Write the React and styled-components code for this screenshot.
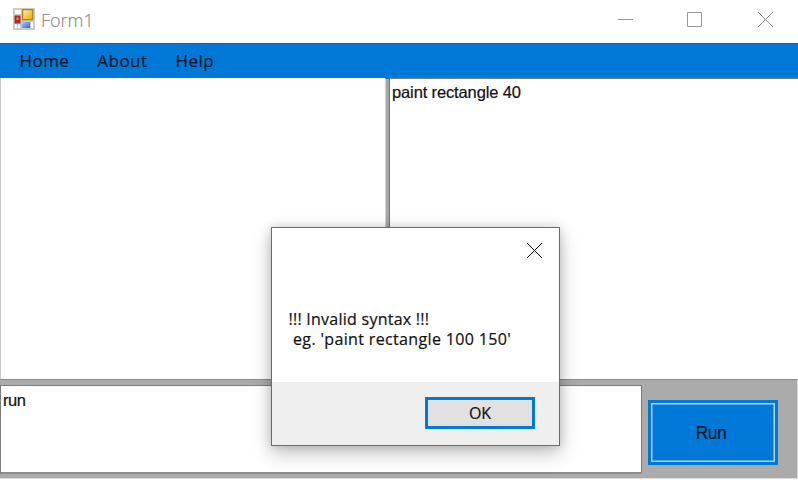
import React from "react";
import styled, { createGlobalStyle } from "styled-components";

const Global = createGlobalStyle`
  *, *::before, *::after { box-sizing: border-box; }
  body { margin: 0; overflow: hidden; background: #fff; }
`;

const Window = styled.div`
  position: relative;
  display: flex;
  flex-direction: column;
  width: 798px;
  height: 480px;
  overflow: hidden;
  background: #fff;
  color: #111;
`;

const TitleBar = styled.header`
  display: flex;
  align-items: flex-start;
  height: 43px;
  flex: none;
  padding-left: 13px;
`;

const FormIcon = styled.svg`
  display: block;
  margin-top: 8px;
`;

const Label = styled.span`
  font-family: ${(p) => p.$font || '"Open Sans"'}, sans-serif;
  font-size: ${(p) => p.$size || 17}px;
  line-height: 20px;
  letter-spacing: ${(p) => p.$spacing || 0}px;
  -webkit-text-stroke: 0.2px currentColor;
  white-space: pre;
`;

const Title = styled(Label)`
  margin: 10px auto 0 6px;
  font-weight: 300;
  color: #8c8c8c;
`;

const Controls = styled.div`
  display: grid;
  grid-template-columns: 69px 71px 15px;
  padding: 12px 25px 0 0;
`;

const Glyph = styled.svg`
  display: block;
  fill: none;
  stroke: ${(p) => p.$color};
  stroke-width: 1;
`;

const MenuBar = styled.nav`
  display: flex;
  flex: none;
  height: 35px;
  padding: 7px 0 0 19.5px;
  gap: 28px;
  background: #0078d7;
  border-top: 1px solid #0e62a6;
  color: #061626;
`;

const Workspace = styled.main`
  display: flex;
  flex: none;
  height: 301px;
`;

const Canvas = styled.section`
  width: 385px;
  background: #fff;
  border-left: 1px solid #c8c8c8;
`;

const Splitter = styled.div`
  width: 4px;
  background: #a6a6a6;
  border-left: 1px solid #d2d2d2;
  border-top: 1px solid #0078d7;
`;

const Editor = styled.section`
  flex: 1;
  padding: 3px 0 0 2px;
  border-top: 1px solid #7b8288;
  border-left: 1px solid #777;
  display: flex;
  align-items: flex-start;
`;

const CommandBar = styled.footer`
  display: flex;
  flex: none;
  height: 100px;
  padding: 5px 0 0;
  border-top: 1px solid #8c8c8c;
  border-right: 1px solid #d8d8d8;
  border-bottom: 1px solid #dcdcdc;
  background: #ababab;
`;

const CommandInput = styled.div`
  width: 642px;
  height: 89px;
  padding: 4px 0 0 2px;
  background: #fff;
  border: 1px solid #7c7c7c;
  border-bottom: 2px solid #8c8c8c;
`;

const RunButton = styled.button`
  display: flex;
  align-items: center;
  justify-content: center;
  width: 130px;
  height: 65px;
  margin: 15px 0 0 6px;
  padding: 0 4px 0 0;
  border: 3px solid #0078d7;
  background: #0078d7;
  box-shadow: inset 0 0 0 1.5px #b0d4f2;
  color: #071a2c;
`;

const Dialog = styled.div`
  position: absolute;
  left: 271px;
  top: 227px;
  width: 289px;
  height: 219px;
  display: flex;
  flex-direction: column;
  background: #fff;
  border: 1px solid #6b6b6b;
  box-shadow: 0 7px 18px rgba(0, 0, 0, 0.25), 0 0 9px rgba(0, 0, 0, 0.14);
`;

const DialogTop = styled.div`
  display: flex;
  justify-content: flex-end;
  padding: 15px 17px 0 0;
  height: 81px;
`;

const Message = styled.div`
  display: flex;
  flex-direction: column;
  flex: 1;
  padding-left: 16.5px;
`;

const DialogFooter = styled.div`
  display: flex;
  justify-content: flex-end;
  height: 63px;
  padding: 15px 24px 0 0;
  background: #efefef;
`;

const OkButton = styled.button`
  width: 110px;
  height: 32px;
  padding: 0;
  border: 3px solid #0078d7;
  background: #e1e1e1;
  color: #111;
`;

function Cross({ color }) {
  return (
    <Glyph $color={color} width="15" height="15" viewBox="0 0 15 15">
      <path d="M0 0l15 15M15 0L0 15" />
    </Glyph>
  );
}

export default function App() {
  return (
    <Window>
      <Global />
      <TitleBar>
        <FormIcon width="22" height="22" viewBox="0 0 22 22">
          <defs>
            <linearGradient id="gold" x1="0" y1="0" x2="1" y2="1">
              <stop stopColor="#ffed9f" /><stop offset="1" stopColor="#efad00" />
            </linearGradient>
            <linearGradient id="blue" x1="0" y1="0" x2="1" y2="1">
              <stop stopColor="#a5c8ff" /><stop offset="1" stopColor="#3265cf" />
            </linearGradient>
          </defs>
          <path fill="#cacaca" d="M0 0h22v22H0z" />
          <path fill="#fff" d="M2 2h6v4H2zM2 16h2v4H2zM5 16h2v4H5zM18 14h2v6h-2z" />
          <path fill="#b52820" d="M1.5 7.5h6v8h-6z" />
          <path fill="#e27b6c" d="M3.3 9.5h2.4v2.5H3.3z" />
          <path fill="url(#gold)" stroke="#b08416" strokeWidth="1.3" d="M9.6 1.6h10v10h-10z" />
          <path fill="url(#blue)" d="M9 14h8v6H9z" />
        </FormIcon>
        <Title $size={18}>Form1</Title>
        <Controls>
          <Glyph $color="#999" width="15" height="15" viewBox="0 0 15 15">
            <path d="M0 7.5h15" />
          </Glyph>
          <Glyph $color="#999" width="15" height="15" viewBox="0 0 15 15">
            <path d="M.5.5h14v14H.5z" />
          </Glyph>
          <Cross color="#888" />
        </Controls>
      </TitleBar>
      <MenuBar>
        <Label $spacing={0.45}>Home</Label>
        <Label $spacing={0.45}>About</Label>
        <Label $spacing={0.45}>Help</Label>
      </MenuBar>
      <Workspace>
        <Canvas />
        <Splitter />
        <Editor>
          <Label $font='"Liberation Sans"' $size={16.5} $spacing={-0.13}>paint rectangle 40</Label>
        </Editor>
      </Workspace>
      <CommandBar>
        <CommandInput>
          <Label $font='"Liberation Sans"' $size={16.5} $spacing={-0.4}>run</Label>
        </CommandInput>
        <RunButton>
          <Label $font='"Liberation Sans"' $size={17.5} $spacing={-0.5}>Run</Label>
        </RunButton>
      </CommandBar>
      <Dialog>
        <DialogTop><Cross color="#000" /></DialogTop>
        <Message>
          <Label $size={16} $spacing={0.25}>!!! Invalid syntax !!!</Label>
          <Label $size={16} $spacing={0.35}>{" eg. 'paint rectangle 100 150'"}</Label>
        </Message>
        <DialogFooter>
          <OkButton><Label $size={16}>OK</Label></OkButton>
        </DialogFooter>
      </Dialog>
    </Window>
  );
}
